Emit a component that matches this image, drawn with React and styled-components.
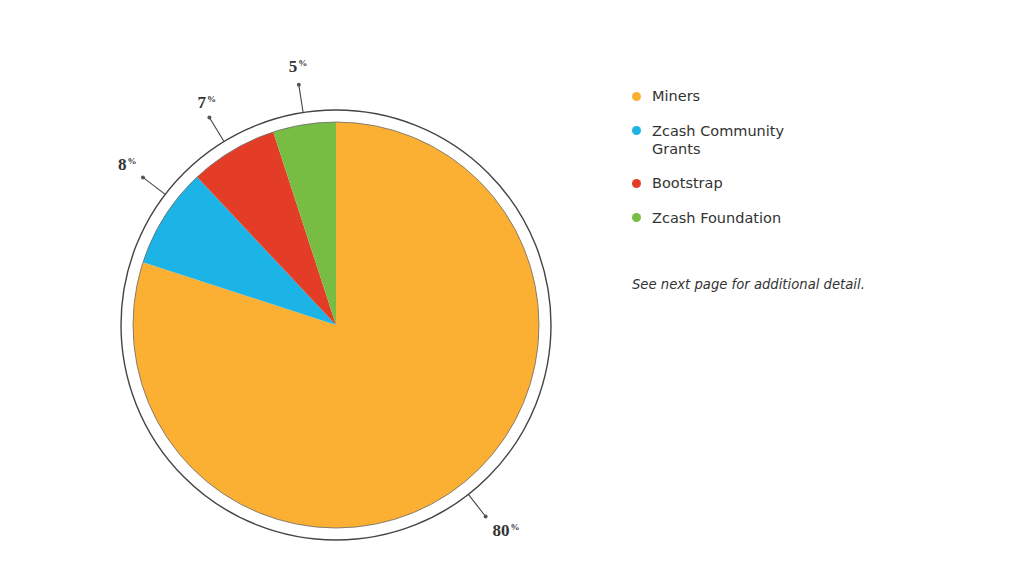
import React from "react";
import styled, { createGlobalStyle } from "styled-components";

const GlobalStyle = createGlobalStyle`
    html, body {
        margin: 0;
        padding: 0;
        background: #ffffff;
    }
    body {
        font-family: "DejaVu Sans", "Liberation Sans", sans-serif;
        color: #333333;
    }
`

const Page = styled.div`
    width: 1015px;
    height: 575px;
    display: flex;
    align-items: flex-start;
    padding: 50px 0 0 100px;
    box-sizing: border-box;
`
const Chart = styled.svg`
    width: 470px;
    height: 500px;
    flex-shrink: 0;
    display: block;
`
const Side = styled.div`
    margin-left: 62px;
    margin-top: 37px;
    display: flex;
    flex-direction: column;
`
const Legend = styled.ul`
    list-style: none;
    margin: 0;
    padding: 0;
    display: flex;
    flex-direction: column;
    row-gap: 16.5px;
`
const LegendItem = styled.li`
    display: flex;
    align-items: flex-start;
    column-gap: 11px;
    font-size: 14.5px;
    line-height: 18px;
    color: #333333;
`
const Swatch = styled.span`
    width: 9px;
    height: 9px;
    border-radius: 50%;
    background: ${p => p.color};
    margin-top: 4.5px;
    flex-shrink: 0;
`
const Name = styled.span`
    max-width: 140px;
`
const Note = styled.p`
    margin: 49px 0 0 0;
    font-size: 13.2px;
    line-height: 18px;
    font-style: italic;
    color: #333333;
`
const Label = styled.text`
    font-family: "Liberation Serif", "Times New Roman", serif;
    font-weight: bold;
    font-size: 17px;
    fill: #333333;
`
const Sup = styled.tspan`
    font-size: 9px;
`

const slices = [
    { name: "Miners", value: 80, color: "#FBB034" },
    { name: "Zcash Community Grants", value: 8, color: "#1CB3E6" },
    { name: "Bootstrap", value: 7, color: "#E33D28" },
    { name: "Zcash Foundation", value: 5, color: "#78BD43" },
]

// leader lines: angle clockwise from 12 o'clock, label offset from the dot
const labels = [
    { value: 80, angle: 142, dx: 7, dy: 20 },
    { value: 8, angle: 307.4, dx: -25, dy: -7 },
    { value: 7, angle: 328.6, dx: -12, dy: -10 },
    { value: 5, angle: 351.2, dx: -10, dy: -13 },
]

const CX = 236
const CY = 275
const R = 203
const RING = 215

function point(angle, r) {
    const a = (angle * Math.PI) / 180
    return [CX + r * Math.sin(a), CY - r * Math.cos(a)]
}

function slicePath(start, end) {
    const [x1, y1] = point(start, R)
    const [x2, y2] = point(end, R)
    const large = end - start > 180 ? 1 : 0
    return `M${CX},${CY} L${x1},${y1} A${R},${R} 0 ${large} 1 ${x2},${y2} Z`
}

function Pie() {
    let acc = 0
    const paths = slices.map(s => {
        const start = (acc / 100) * 360
        acc += s.value
        const end = (acc / 100) * 360
        return <path key={s.name} d={slicePath(start, end)} fill={s.color} />
    })

    return (
        <Chart viewBox="0 0 470 500">
            <circle cx={CX} cy={CY} r={RING} fill="none" stroke="#444" strokeWidth="1.4" />
            {paths}
            <circle cx={CX} cy={CY} r={R} fill="none" stroke="#6b6b6b" strokeWidth="0.8" />
            {labels.map(l => {
                const [x1, y1] = point(l.angle, RING)
                const [x2, y2] = point(l.angle, 243)
                return (
                    <g key={l.value}>
                        <line x1={x1} y1={y1} x2={x2} y2={y2} stroke="#444" strokeWidth="1.1" />
                        <circle cx={x2} cy={y2} r="2" fill="#555" />
                        <Label x={x2 + l.dx} y={y2 + l.dy}>
                            {l.value}
                            <Sup dx="1" dy="-6">%</Sup>
                        </Label>
                    </g>
                )
            })}
        </Chart>
    )
}

export default function App() {
    return (
        <Page>
            <GlobalStyle />
            <Pie />
            <Side>
                <Legend>
                    {slices.map(s => (
                        <LegendItem key={s.name}>
                            <Swatch color={s.color} />
                            <Name>{s.name}</Name>
                        </LegendItem>
                    ))}
                </Legend>
                <Note>See next page for additional detail.</Note>
            </Side>
        </Page>
    )
}
